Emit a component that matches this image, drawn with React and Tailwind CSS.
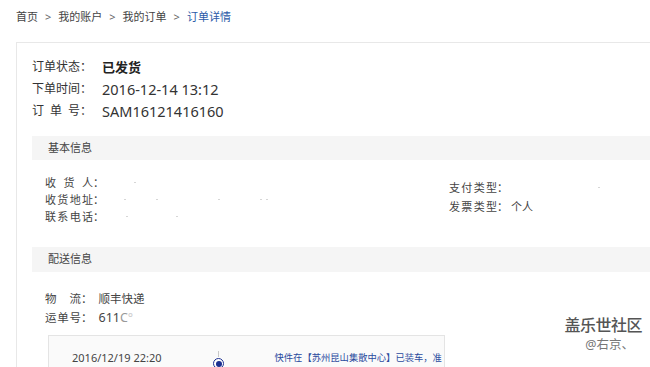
import React from "react";

const font = {
  fontFamily: '"Noto Sans", "Noto Sans CJK SC", sans-serif',
};

function Spread({ w, chars }) {
  return (
    <span className="inline-flex justify-between" style={{ width: w }}>
      {chars.map((c, i) => (
        <span key={i}>{c}</span>
      ))}
    </span>
  );
}

function Speck({ className }) {
  return <span className={"inline-block w-[2px] h-[1px] bg-[#d6d6d6] " + className} />;
}

export default function App() {
  return (
    <div
      className="w-[650px] h-[367px] overflow-hidden bg-white relative text-[#333]"
      style={font}
    >
      {/* breadcrumb */}
      <nav className="h-[42px] pl-4 pt-[9px] flex items-start gap-[6px] text-[11px] leading-[16px] text-[#444]">
        <span>首页</span>
        <span className="text-[#666] mx-[1px]">&gt;</span>
        <span>我的账户</span>
        <span className="text-[#666] mx-[1px]">&gt;</span>
        <span>我的订单</span>
        <span className="text-[#666] mx-[1px]">&gt;</span>
        <span className="text-[#2c5aa8]">订单详情</span>
      </nav>

      {/* main panel */}
      <div className="ml-4 border-l border-t border-[#e8e8e8] pl-[15px] pt-[13px] h-[400px]">
        {/* status */}
        <div className="text-[12px] leading-[22px]">
          <div className="flex items-center">
            <span className="w-[70px] flex">
              <Spread w={48} chars={["订", "单", "状", "态"]} />
              <span>：</span>
            </span>
            <span className="font-bold text-[13px] text-[#222]">已发货</span>
          </div>
          <div className="flex items-center">
            <span className="w-[70px] flex">
              <Spread w={48} chars={["下", "单", "时", "间"]} />
              <span>：</span>
            </span>
            <span className="text-[14.5px] text-[#333]">2016-12-14 13:12</span>
          </div>
          <div className="flex items-center">
            <span className="w-[70px] flex">
              <Spread w={48} chars={["订", "单", "号"]} />
              <span>：</span>
            </span>
            <span className="text-[14.5px] text-[#333]">SAM16121416160</span>
          </div>
        </div>

        {/* basic info bar */}
        <div className="mt-[14px] h-[24px] bg-[#f5f5f5] pl-4 flex items-center text-[11px] text-[#444]">
          基本信息
        </div>
        <div className="h-[87px] flex text-[11px] text-[#444]">
          <div className="pl-[13px] pt-[14px] leading-[17px] w-[417px]">
            <div className="flex items-center">
              <Spread w={48} chars={["收", "货", "人"]} />
              <span>：</span>
              <Speck className="ml-[30px]" />
            </div>
            <div className="flex items-center">
              <Spread w={48} chars={["收", "货", "地", "址"]} />
              <span>：</span>
              <Speck className="ml-[20px]" />
              <Speck className="ml-[30px]" />
              <Speck className="ml-[60px]" />
              <Speck className="ml-[40px]" />
              <Speck className="ml-[4px]" />
            </div>
            <div className="flex items-center">
              <Spread w={48} chars={["联", "系", "电", "话"]} />
              <span>：</span>
              <Speck className="ml-[22px]" />
              <Speck className="ml-[48px]" />
            </div>
          </div>
          <div className="pt-[18px] leading-[19px]">
            <div className="flex items-center">
              <Spread w={48} chars={["支", "付", "类", "型"]} />
              <span>：</span>
              <Speck className="ml-[90px]" />
            </div>
            <div className="flex items-center">
              <Spread w={48} chars={["发", "票", "类", "型"]} />
              <span>：</span>
              <span className="ml-[3px]">个人</span>
            </div>
          </div>
        </div>

        {/* delivery bar */}
        <div className="h-[25px] bg-[#f5f5f5] pl-4 flex items-center text-[11px] text-[#444]">
          配送信息
        </div>
        <div className="pl-[13px] pt-[17px] leading-[19px] text-[11.5px] text-[#444]">
          <div className="flex items-center">
            <Spread w={36} chars={["物", "流"]} />
            <span>：</span>
            <span className="ml-[6px]">顺丰快递</span>
          </div>
          <div className="flex items-center">
            <Spread w={36} chars={["运", "单", "号"]} />
            <span>：</span>
            <span className="ml-[6px] text-[12.5px]">
              611<span className="text-[#999]">C</span>
              <span className="text-[#ccc]">°</span>
            </span>
          </div>
        </div>

        {/* timeline box */}
        <div className="ml-[16px] mt-[8px] w-[397px] h-[60px] overflow-hidden border border-[#e4e4e4] bg-[#fafafa] flex items-start pl-[23px] pt-[15px]">
          <span className="w-[140px] text-[11px] leading-[14px] text-[#444]">2016/12/19 22:20</span>
          <span className="w-[14px] flex flex-col items-center">
            <span className="w-px h-[6px] bg-[#c8c8c8]" />
            <span className="mt-[1px] w-[11px] h-[11px] rounded-full border-[1.5px] border-[#1b2f90] bg-white flex items-center justify-center">
              <span className="w-[6px] h-[6px] rounded-full bg-[#1b2f90]" />
            </span>
          </span>
          <span className="ml-[49px] w-[170px] text-[9.3px] leading-[14px] text-[#2a4a9e] break-all">
            快件在【苏州昆山集散中心】已装车，准备发往下一站
          </span>
        </div>
      </div>

      {/* watermark */}
      <div className="absolute left-[562px] top-[314px] flex flex-col items-end w-[80px]">
        <span className="text-[16px] leading-[22px] font-medium text-[#555] tracking-[-0.5px]">盖乐世社区</span>
        <span className="text-[12.5px] leading-[16px] text-[#777] mt-[1px] mr-[8px]">@右京、</span>
      </div>
    </div>
  );
}
